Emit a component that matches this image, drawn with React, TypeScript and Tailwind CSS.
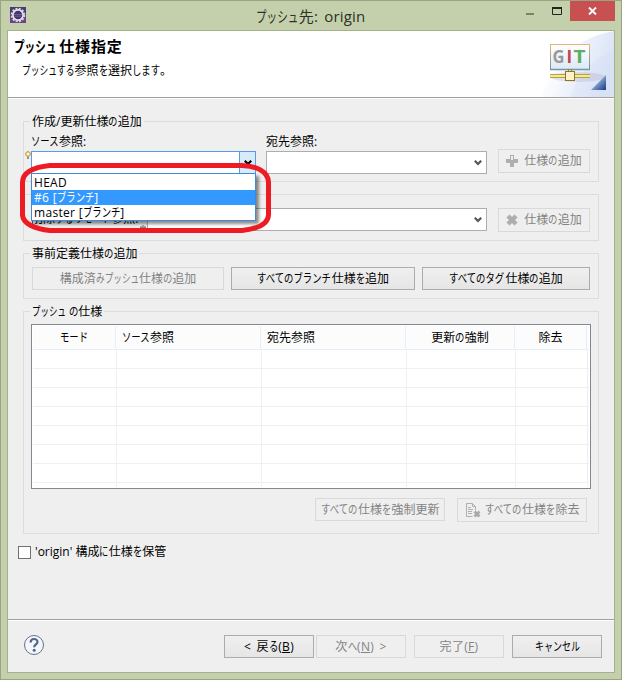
import { ReactNode } from 'react';

const KANA = /([\u3040-\u30ff]+)/;
const SMALL_KANA = 'ッュャョっゃゅょ';

// Kana are set narrower than kanji, like the Windows UI font does.
const T = ({ children }: { children: string }) => (
  <>
    {children.split(KANA).map((part, i) => {
      if (!KANA.test(part)) return <span key={i}>{part}</span>;
      const width = [...part].reduce(
        (sum, c) => sum + (SMALL_KANA.includes(c) ? 0.63 : 0.78),
        0,
      );
      return (
        <span key={i} className="inline-block" style={{ width: `${width}em` }}>
          <span
            className="inline-block origin-left tracking-normal"
            style={{ transform: `scaleX(${width / part.length})` }}
          >
            {part}
          </span>
        </span>
      );
    })}
  </>
);

const Button = ({
  children,
  className,
  disabled,
}: {
  children: ReactNode;
  className: string;
  disabled?: boolean;
}) => (
  <button
    disabled={disabled}
    className={`flex shrink-0 items-center justify-center border ${
      disabled
        ? 'border-[#d9d9d9] bg-[#efefef] text-[#838383]'
        : 'border-[#acacac] bg-linear-to-b from-[#f0f0f0] to-[#e5e5e5] text-black'
    } ${className}`}
  >
    {children}
  </button>
);

const Group = ({
  title,
  className,
  children,
}: {
  title?: string;
  className: string;
  children: ReactNode;
}) => (
  <section className={`mx-[15px] flex flex-col border border-[#dcdcdc] ${className}`}>
    <div className="flex h-0 items-center pl-[6px]">
      {title && (
        <h2 className="bg-[#efefef] px-[2px] whitespace-pre">
          <T>{title}</T>
        </h2>
      )}
    </div>
    {children}
  </section>
);

const Chevron = ({ color }: { color: string }) => (
  <svg width="8" height="7" viewBox="0 0 8 7">
    <path d="M0.8 1.8 L4 5 L7.2 1.8" fill="none" stroke={color} strokeWidth="2.2" />
  </svg>
);

const Combo = ({ className }: { className: string }) => (
  <div
    className={`flex h-[23px] shrink-0 items-center justify-end border border-[#abadb3] bg-white pr-1 ${className}`}
  >
    <Chevron color="#555" />
  </div>
);

const columns = [
  { title: 'モード', className: 'w-[83px] justify-center' },
  { title: 'ソース参照', className: 'w-[145px] pl-[6px]' },
  { title: '宛先参照', className: 'w-[145px] pl-[6px]' },
  { title: '更新の強制', className: 'w-[109px] justify-center' },
  { title: '除去', className: 'w-[72px] justify-center' },
];

const TitleBar = () => (
  <div className="flex h-[29px] shrink-0 text-[15px] text-[#2d3127]">
    <div className="w-[200px] pt-[6px] pl-[9px]">
      <svg width="16" height="16" viewBox="0 0 16 16">
        <rect width="16" height="16" fill="#4a3a78" />
        <rect y="9" width="16" height="7" fill="#6b438c" />
        <circle cx="8" cy="8" r="6.4" fill="none" stroke="#d8d8d8" strokeWidth="1.8" strokeDasharray="2.1 1.25" />
        <circle cx="8" cy="8" r="5.1" fill="#44346b" stroke="#e4e4e4" strokeWidth="1.7" />
        <path d="M4 7.5h8M4.4 9.2h7.2" stroke="#8a7bb0" strokeWidth="0.6" />
      </svg>
    </div>
    <h1 className="flex-1 pt-[6px] text-center tracking-[0.2px] whitespace-pre [word-spacing:2px]">
      <T>プッシュ先: origin</T>
    </h1>
    <div className="flex w-[200px] justify-end pr-[6px]">
      <svg width="38" height="20" viewBox="0 0 38 20" className="mr-[7px]">
        <path d="M1 13h8" stroke="#7b806f" strokeWidth="2" />
        <path d="M27.5 7.5h9v6h-9z" fill="none" stroke="#22251e" />
        <path d="M27 7h10" stroke="#22251e" strokeWidth="2" />
      </svg>
      <div className="flex h-5 w-[45px] items-center justify-center bg-[#c75050]">
        <svg width="9" height="8" viewBox="0 0 9 8">
          <path d="M1 0.5 L8 7.5 M8 0.5 L1 7.5" stroke="#fff" strokeWidth="1.9" />
        </svg>
      </div>
    </div>
  </div>
);

const Banner = () => (
  <header className="flex h-[67px] shrink-0 justify-between border-b border-[#a0a0a0] bg-white">
    <div className="pt-[4px] pl-[6px]">
      <h2 className="flex gap-[3px] text-[15px] leading-[22px] font-bold tracking-[0.8px]">
        <span><T>プッシュ</T></span>
        <span>仕様指定</span>
      </h2>
      <p className="mt-[5px] pl-2">
        <T>プッシュする参照を選択します。</T>
      </p>
    </div>
    <svg width="76" height="66" viewBox="538 31 76 66">
      <defs>
        <linearGradient id="swoosh" x1="0" y1="0" x2="1" y2="0.3">
          <stop offset="0.2" stopColor="#fff" />
          <stop offset="1" stopColor="#dbe4f7" />
        </linearGradient>
        <linearGradient id="corner" x1="0" y1="0" x2="1" y2="1">
          <stop offset="0.3" stopColor="#a9c3e6" />
          <stop offset="1" stopColor="#123a80" />
        </linearGradient>
        <linearGradient id="card" x1="0" y1="0" x2="0" y2="1">
          <stop offset="0" stopColor="#fff" />
          <stop offset="1" stopColor="#dce9f7" />
        </linearGradient>
        <linearGradient id="frame" x1="0" y1="0" x2="0" y2="1">
          <stop offset="0" stopColor="#e2b878" />
          <stop offset="1" stopColor="#6d929c" />
        </linearGradient>
      </defs>
      <path d="M614 31 Q580 37 561 60 Q548 78 541 97 H614Z" fill="url(#swoosh)" />
      <path d="M614 52 Q585 58 570 97 H614Z" fill="#cfdbf5" opacity="0.25" />
      <ellipse cx="578" cy="77" rx="27" ry="5" fill="#a89bb8" opacity="0.25" />
      <rect x="550.5" y="44.5" width="39" height="25" fill="url(#card)" stroke="url(#frame)" />
      <path d="M550 69.5h40" stroke="#7796a0" strokeWidth="1.5" />
      <g fontFamily="Open Sans, sans-serif" fontWeight="700" fontSize="17">
        <text x="552.5" y="63" fill="#999" textLength="12" lengthAdjust="spacingAndGlyphs">G</text>
        <text x="566.5" y="63" fill="#c4454b">I</text>
        <text x="573.5" y="63" fill="#5dae62" textLength="12" lengthAdjust="spacingAndGlyphs">T</text>
      </g>
      <path d="M550 74.5h40M550 77.5h40" stroke="#b5a432" />
      <path d="M550 76h40" stroke="#f2ea9b" strokeWidth="2" />
      <path d="M568.5 69v3M571.5 69v3" stroke="#7d8450" />
      <rect x="565.5" y="71.5" width="9" height="9" fill="#fff2c4" stroke="#94712a" />
      <path d="M606 75v15h-15z" fill="url(#corner)" />
    </svg>
  </header>
);

const SourceDropdown = () => (
  <>
    <ul className="absolute top-[173px] left-[31px] h-[48px] w-[225px] border border-[#3d8bd8] bg-white pt-px leading-[15px] tracking-[0.3px] shadow-[3px_3px_3px_rgba(0,0,0,0.45)]">
      <li className="h-[15px] pl-[2px]">HEAD</li>
      <li className="h-[15px] bg-[#3399ff] pl-[2px] text-white">
        <T>#6 [ブランチ]</T>
      </li>
      <li className="h-[15px] pl-[2px]">
        <T>master [ブランチ]</T>
      </li>
    </ul>
    <svg width="251" height="70" viewBox="0 0 251 70" className="absolute top-[163px] left-[20px]">
      <path
        d="M30 2.5H222C236 3 248 8 248.5 19V52C248 62 236 66 222 67.5H30C15 66 3 61 2.5 52V19C3 9 15 4 30 2.5Z"
        fill="none"
        stroke="#ed1c24"
        strokeWidth="5"
      />
    </svg>
  </>
);

export default function App() {
  return (
    <div className="relative flex h-[680px] w-[622px] flex-col overflow-hidden border border-[#98a482] bg-[#c4d0ac] font-['Open_Sans','Noto_Sans_CJK_JP',sans-serif] text-[12px] leading-[18px] whitespace-nowrap text-black">
      <TitleBar />
      <main className="mx-[6px] mb-[6px] flex flex-1 flex-col border border-[#a4b18b] bg-[#efefef]">
        <Banner />
        <div className="h-px shrink-0 bg-white" />

        <Group title="作成/更新仕様の追加" className="mt-[22px] h-[61px]">
          <div className="flex pl-[7px]">
            <div className="mr-[10px] w-[225px]">
              <div className="h-[29px] pt-[11px]"><T>ソース参照:</T></div>
              <div className="relative flex h-[23px] border border-[#569de5] bg-white">
                <svg width="6" height="10" viewBox="0 0 6 10" className="absolute -top-px -left-[7px]">
                  <circle cx="3" cy="3" r="2.3" fill="#fff4c8" stroke="#c48720" />
                  <path d="M2 5.5h2v2.5h-2z" fill="#9b8f80" />
                </svg>
                <div className="ml-auto flex w-[16px] items-center justify-center border-l border-[#569de5] bg-[#d9eafa]">
                  <Chevron color="#000" />
                </div>
              </div>
            </div>
            <div className="mr-[11px] w-[221px]">
              <div className="h-[29px] pt-[11px]"><T>宛先参照:</T></div>
              <Combo className="w-[221px]" />
            </div>
            <Button disabled className="mt-[27px] h-[24px] w-[92px] gap-[6px]">
              <svg width="12" height="12" viewBox="0 0 12 12">
                <path d="M4 0h4v4h4v4H8v4H4V8H0V4h4z" fill="#aeaeae" />
                <path d="M5 1h2v4H5z" fill="#efefef" />
              </svg>
              <span><T>仕様の追加</T></span>
            </Button>
          </div>
        </Group>

        <Group className="mt-[12px] h-[47px]">
          <div className="flex pt-[13px] pl-[7px]">
            <div className="flex w-[116px] pt-[2px]">
              <span><T>削除するリモート参照:</T></span>
              <svg width="6" height="6" viewBox="0 0 6 6" className="mt-[15px] ml-[2px] shrink-0">
                <path d="M3 0v6M1 1v3M5 1v3M0 3h6" stroke="#333" strokeWidth="0.7" />
              </svg>
            </div>
            <Combo className="mr-[11px] w-[340px]" />
            <Button disabled className="h-[24px] w-[92px] gap-[6px]">
              <svg width="12" height="12" viewBox="0 0 12 12">
                <path d="M2 2l8 8M10 2l-8 8" stroke="#aeaeae" strokeWidth="4.4" />
              </svg>
              <span><T>仕様の追加</T></span>
            </Button>
          </div>
        </Group>

        <Group title="事前定義仕様の追加" className="mt-[12px] h-[46px]">
          <div className="flex gap-[7px] pt-[13px] pl-[8px]">
            <Button disabled className="h-[23px] w-[192px]"><T>構成済みプッシュ仕様の追加</T></Button>
            <Button className="h-[23px] w-[184px]"><T>すべてのブランチ仕様を追加</T></Button>
            <Button className="h-[23px] w-[168px]"><T>すべてのタグ仕様の追加</T></Button>
          </div>
        </Group>

        <Group title="プッシュ の仕様" className="mt-[12px] h-[223px]">
          <div className="mt-[12px] ml-[7px] flex h-[165px] w-[560px] shrink-0 flex-col border border-[#828790] bg-white p-px">
            <div className="flex h-[24px] shrink-0 border-b border-[#e5effa] bg-[#fcfcfc]">
              {columns.map(({ title, className }) => (
                <div key={title} className={`flex items-center border-r border-[#e5effa] ${className}`}>
                  <span><T>{title}</T></span>
                </div>
              ))}
            </div>
            {[0, 1, 2, 3, 4, 5, 6, 7].map((row) => (
              <div
                key={row}
                className={`flex pl-px ${row < 7 ? 'h-[19px] border-b border-[#f0f0f0]' : 'flex-1'}`}
              >
                {columns.map(({ title, className }) => (
                  <div key={title} className={`border-r border-[#f0f0f0] ${className}`} />
                ))}
              </div>
            ))}
          </div>
          <div className="mt-[9px] mr-[11px] flex justify-end gap-[12px]">
            <Button disabled className="h-[23px] w-[130px]"><T>すべての仕様を強制更新</T></Button>
            <Button disabled className="h-[24px] w-[130px] gap-[4px]">
              <svg width="16" height="16" viewBox="0 0 16 16">
                <path d="M7.5 14.5h-6v-13h6l3 3v4M7.5 1.5v3h3" fill="none" stroke="#b0b0b0" />
                <path d="M3 5.5h3M3 7.5h5M3 9.5h4M3 11.5h4" stroke="#b0b0b0" />
                <path d="M9.5 9.5l5 5M14.5 9.5l-5 5" stroke="#a8a8a8" strokeWidth="2.6" />
              </svg>
              <span><T>すべての仕様を除去</T></span>
            </Button>
          </div>
        </Group>

        <label className="mt-[9px] ml-[10px] flex items-center">
          <span className="mr-[4px] h-[13px] w-[13px] border border-[#707070] bg-white" />
          <span><T>'origin' 構成に仕様を保管</T></span>
        </label>

        <footer className="mt-auto flex h-[53px] shrink-0 border-t border-[#a0a0a0]">
          <div className="flex w-full border-t border-white pt-[14px]">
            <svg width="22" height="22" viewBox="0 0 22 22" className="mr-[179px] -mt-px ml-[15px]">
              <circle cx="11" cy="11" r="9.5" fill="#f4f6f9" stroke="#61718f" />
              <path d="M7.6 8.4C7.6 3.9 14.6 4 14.5 8C14.4 10.4 11.2 10.5 11.2 13.2" fill="none" stroke="#53658a" strokeWidth="2.2" />
              <circle cx="11.2" cy="16.2" r="1.5" fill="#53658a" />
            </svg>
            <Button className="mr-[2px] h-[23px] w-[90px]">
              <span className="tracking-[0.3px] [word-spacing:2px]">&lt; <T>戻る</T>(<u>B</u>)</span>
            </Button>
            <Button disabled className="mr-[8px] h-[23px] w-[90px]">
              <span className="tracking-[0.3px] [word-spacing:2px]"><T>次へ</T>(<u>N</u>) &gt;</span>
            </Button>
            <Button disabled className="mr-[8px] h-[23px] w-[90px]">
              <span className="tracking-[0.3px]"><T>完了</T>(<u>F</u>)</span>
            </Button>
            <Button className="h-[23px] w-[90px]"><T>キャンセル</T></Button>
          </div>
        </footer>
      </main>
      {/* offset by the window border */}
      <div className="absolute -top-px -left-px">
        <SourceDropdown />
      </div>
    </div>
  );
}
